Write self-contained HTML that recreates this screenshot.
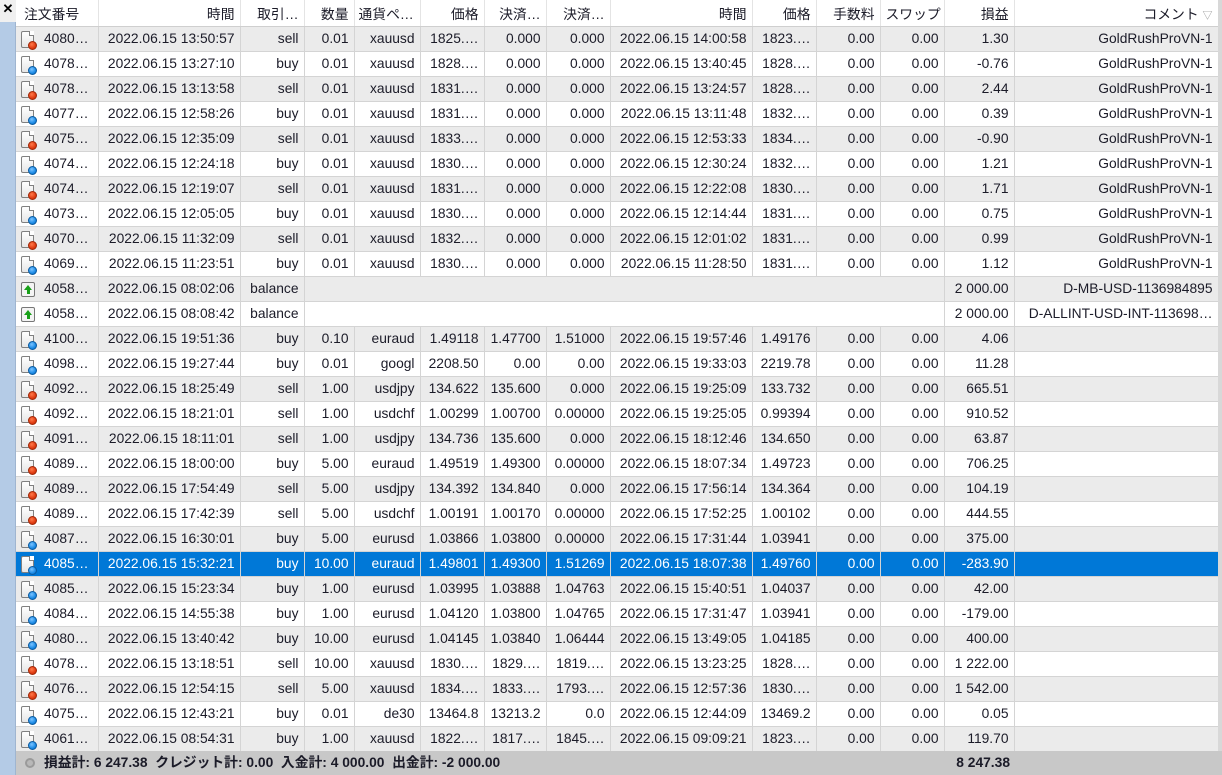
<!DOCTYPE html>
<html><head><meta charset="utf-8"><style>
*{margin:0;padding:0;box-sizing:border-box}
body{width:1222px;height:775px;overflow:hidden;background:#c8c8c8;font-family:"Segoe UI","Liberation Sans","Noto Sans CJK JP",sans-serif;font-size:13.8px;color:#1b1b28;position:relative}
#strip{position:absolute;left:0;top:0;width:16px;height:775px;background:#b4cbe6;border-right:1px solid #9fb5d0}
#x{position:absolute;left:0;top:0;width:16px;height:22px;background:#f0f0f0;font:bold 13px "Liberation Sans",sans-serif;text-align:center;line-height:18px;color:#000}
table{position:absolute;left:16px;top:0;border-collapse:collapse;table-layout:fixed;width:1202px}
td,th{height:25px;border-right:1px solid #d4d4d4;border-bottom:1px solid #d4d4d4;padding:0 5px;text-align:right;white-space:nowrap;overflow:hidden;font-weight:normal}
th{height:26px;background:#fff;border-right:1px solid #e4e4e4;border-bottom:1px solid #cfcfcf}
th.l{text-align:left;padding-left:8px}
tr.g td{background:#ebebeb}
tr.w td{background:#fff}
tr.sel td{background:#0078d7;color:#fff}
td.id{text-align:left;padding-left:4px;position:relative;overflow:visible}
td.id span.t{position:absolute;left:28px;top:4px}
.doc{position:absolute;left:5px;top:4px;width:13px;height:17px;border:1px solid #808080;border-radius:2px;background:linear-gradient(#fff,#e6e6e6)}
.doc:before{content:"";position:absolute;right:-1px;top:-1px;width:4px;height:4px;background:#fff;border-left:1px solid #808080;border-bottom:1px solid #808080}
.doc i{position:absolute;right:-4px;bottom:-3px;width:9px;height:9px;border-radius:50%}
.s i{background:radial-gradient(circle at 40% 35%,#ff7a4a,#e03a10 60%,#b02a08);border:1px solid #a02808}
.b i{background:radial-gradient(circle at 40% 35%,#7cc4ff,#1a8ae6 60%,#0a62b0);border:1px solid #0a5aa0}
.bal{position:absolute;left:5px;top:5px;width:14px;height:15px;border:1px solid #777;background:#f4f4f4;border-radius:2px}
.bal:after{content:"";position:absolute;left:2px;top:2px;width:0;height:0;border-left:4px solid transparent;border-right:4px solid transparent;border-bottom:5px solid #18a018}
.bal b{position:absolute;left:4.5px;top:7px;width:3px;height:4px;background:#18a018}
#foot{position:absolute;left:16px;top:751px;width:1206px;height:24px;background:#c8c8c8;font-weight:bold;line-height:24px}
#foot .c{position:absolute;left:9px;top:7px;width:10px;height:10px;border-radius:50%;border:2px solid #9a9a9a;background:#b8b8b8}
#foot .t{position:absolute;left:28px}
#foot .r{position:absolute;right:212px}
#rs{position:absolute;left:1218px;top:0;width:4px;height:751px;background:#d8d8d8}
</style></head><body>
<div id="strip"></div><div id="x">✕</div>
<table>
<colgroup><col style="width:82px"><col style="width:142px"><col style="width:64px"><col style="width:50px"><col style="width:66px"><col style="width:64px"><col style="width:62px"><col style="width:64px"><col style="width:142px"><col style="width:64px"><col style="width:64px"><col style="width:64px"><col style="width:70px"><col style="width:204px"></colgroup>
<tr><th class="l">注文番号</th><th>時間</th><th>取引…</th><th>数量</th><th class="l" style="padding-left:4px">通貨ペ…</th><th>価格</th><th>決済…</th><th>決済…</th><th>時間</th><th>価格</th><th>手数料</th><th>スワップ</th><th>損益</th><th>コメント <span style="color:#999;font-size:10px">▽</span></th></tr>
<tr class="g"><td class="id"><span class="doc s"><i></i></span><span class="t">4080…</span></td><td>2022.06.15 13:50:57</td><td>sell</td><td>0.01</td><td>xauusd</td><td>1825.…</td><td>0.000</td><td>0.000</td><td>2022.06.15 14:00:58</td><td>1823.…</td><td>0.00</td><td>0.00</td><td>1.30</td><td>GoldRushProVN-1</td></tr>
<tr class="w"><td class="id"><span class="doc b"><i></i></span><span class="t">4078…</span></td><td>2022.06.15 13:27:10</td><td>buy</td><td>0.01</td><td>xauusd</td><td>1828.…</td><td>0.000</td><td>0.000</td><td>2022.06.15 13:40:45</td><td>1828.…</td><td>0.00</td><td>0.00</td><td>-0.76</td><td>GoldRushProVN-1</td></tr>
<tr class="g"><td class="id"><span class="doc s"><i></i></span><span class="t">4078…</span></td><td>2022.06.15 13:13:58</td><td>sell</td><td>0.01</td><td>xauusd</td><td>1831.…</td><td>0.000</td><td>0.000</td><td>2022.06.15 13:24:57</td><td>1828.…</td><td>0.00</td><td>0.00</td><td>2.44</td><td>GoldRushProVN-1</td></tr>
<tr class="w"><td class="id"><span class="doc b"><i></i></span><span class="t">4077…</span></td><td>2022.06.15 12:58:26</td><td>buy</td><td>0.01</td><td>xauusd</td><td>1831.…</td><td>0.000</td><td>0.000</td><td>2022.06.15 13:11:48</td><td>1832.…</td><td>0.00</td><td>0.00</td><td>0.39</td><td>GoldRushProVN-1</td></tr>
<tr class="g"><td class="id"><span class="doc s"><i></i></span><span class="t">4075…</span></td><td>2022.06.15 12:35:09</td><td>sell</td><td>0.01</td><td>xauusd</td><td>1833.…</td><td>0.000</td><td>0.000</td><td>2022.06.15 12:53:33</td><td>1834.…</td><td>0.00</td><td>0.00</td><td>-0.90</td><td>GoldRushProVN-1</td></tr>
<tr class="w"><td class="id"><span class="doc b"><i></i></span><span class="t">4074…</span></td><td>2022.06.15 12:24:18</td><td>buy</td><td>0.01</td><td>xauusd</td><td>1830.…</td><td>0.000</td><td>0.000</td><td>2022.06.15 12:30:24</td><td>1832.…</td><td>0.00</td><td>0.00</td><td>1.21</td><td>GoldRushProVN-1</td></tr>
<tr class="g"><td class="id"><span class="doc s"><i></i></span><span class="t">4074…</span></td><td>2022.06.15 12:19:07</td><td>sell</td><td>0.01</td><td>xauusd</td><td>1831.…</td><td>0.000</td><td>0.000</td><td>2022.06.15 12:22:08</td><td>1830.…</td><td>0.00</td><td>0.00</td><td>1.71</td><td>GoldRushProVN-1</td></tr>
<tr class="w"><td class="id"><span class="doc b"><i></i></span><span class="t">4073…</span></td><td>2022.06.15 12:05:05</td><td>buy</td><td>0.01</td><td>xauusd</td><td>1830.…</td><td>0.000</td><td>0.000</td><td>2022.06.15 12:14:44</td><td>1831.…</td><td>0.00</td><td>0.00</td><td>0.75</td><td>GoldRushProVN-1</td></tr>
<tr class="g"><td class="id"><span class="doc s"><i></i></span><span class="t">4070…</span></td><td>2022.06.15 11:32:09</td><td>sell</td><td>0.01</td><td>xauusd</td><td>1832.…</td><td>0.000</td><td>0.000</td><td>2022.06.15 12:01:02</td><td>1831.…</td><td>0.00</td><td>0.00</td><td>0.99</td><td>GoldRushProVN-1</td></tr>
<tr class="w"><td class="id"><span class="doc b"><i></i></span><span class="t">4069…</span></td><td>2022.06.15 11:23:51</td><td>buy</td><td>0.01</td><td>xauusd</td><td>1830.…</td><td>0.000</td><td>0.000</td><td>2022.06.15 11:28:50</td><td>1831.…</td><td>0.00</td><td>0.00</td><td>1.12</td><td>GoldRushProVN-1</td></tr>
<tr class="g"><td class="id"><span class="bal"><b></b></span><span class="t">4058…</span></td><td>2022.06.15 08:02:06</td><td>balance</td><td colspan="9"></td><td>2 000.00</td><td>D-MB-USD-1136984895</td></tr>
<tr class="w"><td class="id"><span class="bal"><b></b></span><span class="t">4058…</span></td><td>2022.06.15 08:08:42</td><td>balance</td><td colspan="9"></td><td>2 000.00</td><td>D-ALLINT-USD-INT-113698…</td></tr>
<tr class="g"><td class="id"><span class="doc b"><i></i></span><span class="t">4100…</span></td><td>2022.06.15 19:51:36</td><td>buy</td><td>0.10</td><td>euraud</td><td>1.49118</td><td>1.47700</td><td>1.51000</td><td>2022.06.15 19:57:46</td><td>1.49176</td><td>0.00</td><td>0.00</td><td>4.06</td><td></td></tr>
<tr class="w"><td class="id"><span class="doc b"><i></i></span><span class="t">4098…</span></td><td>2022.06.15 19:27:44</td><td>buy</td><td>0.01</td><td>googl</td><td>2208.50</td><td>0.00</td><td>0.00</td><td>2022.06.15 19:33:03</td><td>2219.78</td><td>0.00</td><td>0.00</td><td>11.28</td><td></td></tr>
<tr class="g"><td class="id"><span class="doc s"><i></i></span><span class="t">4092…</span></td><td>2022.06.15 18:25:49</td><td>sell</td><td>1.00</td><td>usdjpy</td><td>134.622</td><td>135.600</td><td>0.000</td><td>2022.06.15 19:25:09</td><td>133.732</td><td>0.00</td><td>0.00</td><td>665.51</td><td></td></tr>
<tr class="w"><td class="id"><span class="doc s"><i></i></span><span class="t">4092…</span></td><td>2022.06.15 18:21:01</td><td>sell</td><td>1.00</td><td>usdchf</td><td>1.00299</td><td>1.00700</td><td>0.00000</td><td>2022.06.15 19:25:05</td><td>0.99394</td><td>0.00</td><td>0.00</td><td>910.52</td><td></td></tr>
<tr class="g"><td class="id"><span class="doc s"><i></i></span><span class="t">4091…</span></td><td>2022.06.15 18:11:01</td><td>sell</td><td>1.00</td><td>usdjpy</td><td>134.736</td><td>135.600</td><td>0.000</td><td>2022.06.15 18:12:46</td><td>134.650</td><td>0.00</td><td>0.00</td><td>63.87</td><td></td></tr>
<tr class="w"><td class="id"><span class="doc s"><i></i></span><span class="t">4089…</span></td><td>2022.06.15 18:00:00</td><td>buy</td><td>5.00</td><td>euraud</td><td>1.49519</td><td>1.49300</td><td>0.00000</td><td>2022.06.15 18:07:34</td><td>1.49723</td><td>0.00</td><td>0.00</td><td>706.25</td><td></td></tr>
<tr class="g"><td class="id"><span class="doc s"><i></i></span><span class="t">4089…</span></td><td>2022.06.15 17:54:49</td><td>sell</td><td>5.00</td><td>usdjpy</td><td>134.392</td><td>134.840</td><td>0.000</td><td>2022.06.15 17:56:14</td><td>134.364</td><td>0.00</td><td>0.00</td><td>104.19</td><td></td></tr>
<tr class="w"><td class="id"><span class="doc s"><i></i></span><span class="t">4089…</span></td><td>2022.06.15 17:42:39</td><td>sell</td><td>5.00</td><td>usdchf</td><td>1.00191</td><td>1.00170</td><td>0.00000</td><td>2022.06.15 17:52:25</td><td>1.00102</td><td>0.00</td><td>0.00</td><td>444.55</td><td></td></tr>
<tr class="g"><td class="id"><span class="doc b"><i></i></span><span class="t">4087…</span></td><td>2022.06.15 16:30:01</td><td>buy</td><td>5.00</td><td>eurusd</td><td>1.03866</td><td>1.03800</td><td>0.00000</td><td>2022.06.15 17:31:44</td><td>1.03941</td><td>0.00</td><td>0.00</td><td>375.00</td><td></td></tr>
<tr class="sel"><td class="id"><span class="doc b"><i></i></span><span class="t">4085…</span></td><td>2022.06.15 15:32:21</td><td>buy</td><td>10.00</td><td>euraud</td><td>1.49801</td><td>1.49300</td><td>1.51269</td><td>2022.06.15 18:07:38</td><td>1.49760</td><td>0.00</td><td>0.00</td><td>-283.90</td><td></td></tr>
<tr class="g"><td class="id"><span class="doc b"><i></i></span><span class="t">4085…</span></td><td>2022.06.15 15:23:34</td><td>buy</td><td>1.00</td><td>eurusd</td><td>1.03995</td><td>1.03888</td><td>1.04763</td><td>2022.06.15 15:40:51</td><td>1.04037</td><td>0.00</td><td>0.00</td><td>42.00</td><td></td></tr>
<tr class="w"><td class="id"><span class="doc b"><i></i></span><span class="t">4084…</span></td><td>2022.06.15 14:55:38</td><td>buy</td><td>1.00</td><td>eurusd</td><td>1.04120</td><td>1.03800</td><td>1.04765</td><td>2022.06.15 17:31:47</td><td>1.03941</td><td>0.00</td><td>0.00</td><td>-179.00</td><td></td></tr>
<tr class="g"><td class="id"><span class="doc b"><i></i></span><span class="t">4080…</span></td><td>2022.06.15 13:40:42</td><td>buy</td><td>10.00</td><td>eurusd</td><td>1.04145</td><td>1.03840</td><td>1.06444</td><td>2022.06.15 13:49:05</td><td>1.04185</td><td>0.00</td><td>0.00</td><td>400.00</td><td></td></tr>
<tr class="w"><td class="id"><span class="doc s"><i></i></span><span class="t">4078…</span></td><td>2022.06.15 13:18:51</td><td>sell</td><td>10.00</td><td>xauusd</td><td>1830.…</td><td>1829.…</td><td>1819.…</td><td>2022.06.15 13:23:25</td><td>1828.…</td><td>0.00</td><td>0.00</td><td>1 222.00</td><td></td></tr>
<tr class="g"><td class="id"><span class="doc s"><i></i></span><span class="t">4076…</span></td><td>2022.06.15 12:54:15</td><td>sell</td><td>5.00</td><td>xauusd</td><td>1834.…</td><td>1833.…</td><td>1793.…</td><td>2022.06.15 12:57:36</td><td>1830.…</td><td>0.00</td><td>0.00</td><td>1 542.00</td><td></td></tr>
<tr class="w"><td class="id"><span class="doc b"><i></i></span><span class="t">4075…</span></td><td>2022.06.15 12:43:21</td><td>buy</td><td>0.01</td><td>de30</td><td>13464.8</td><td>13213.2</td><td>0.0</td><td>2022.06.15 12:44:09</td><td>13469.2</td><td>0.00</td><td>0.00</td><td>0.05</td><td></td></tr>
<tr class="g"><td class="id"><span class="doc b"><i></i></span><span class="t">4061…</span></td><td>2022.06.15 08:54:31</td><td>buy</td><td>1.00</td><td>xauusd</td><td>1822.…</td><td>1817.…</td><td>1845.…</td><td>2022.06.15 09:09:21</td><td>1823.…</td><td>0.00</td><td>0.00</td><td>119.70</td><td></td></tr>
</table>
<div id="rs"></div>
<div id="foot"><span class="c"></span><span class="t">損益計: 6 247.38 &nbsp;クレジット計: 0.00 &nbsp;入金計: 4 000.00 &nbsp;出金計: -2 000.00</span><span class="r">8 247.38</span></div>
</body></html>
